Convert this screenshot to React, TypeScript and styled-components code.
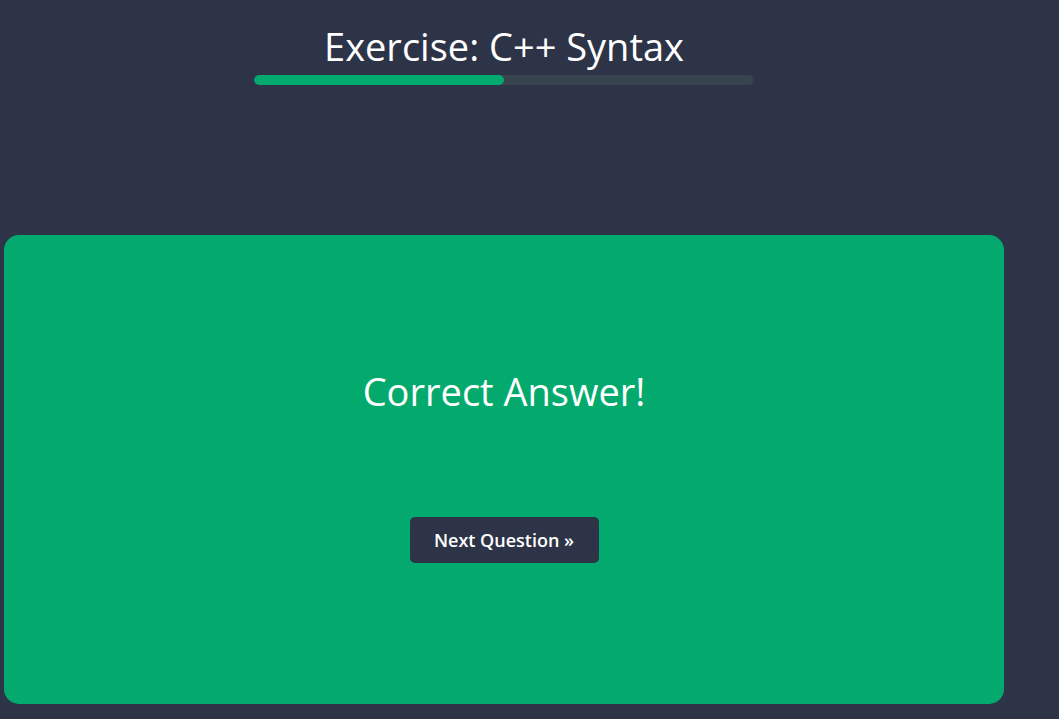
import React from "react";
import styled, { createGlobalStyle } from "styled-components";

const Global = createGlobalStyle`
  html, body { margin: 0; padding: 0; background: #2d3447; }
  body { font-family: "Open Sans", "Noto Sans", sans-serif; color: #fff; }
`;

const Page = styled.div`
  width: 1059px;
  height: 719px;
  box-sizing: border-box;
  padding: 0 0 0 4px;
  overflow: hidden;
`;

const Column = styled.div`
  width: 1000px;
  display: flex;
  flex-direction: column;
  align-items: center;
`;

const Title = styled.h1`
  margin: 24px 0 0;
  font-size: 38px;
  font-weight: 400;
  line-height: 44px;
  color: #fff;
`;

const Track = styled.div`
  margin-top: 7px;
  width: 500px;
  height: 10px;
  border-radius: 5px;
  background: #38444d;
  overflow: hidden;
`;

const Fill = styled.div`
  height: 100%;
  border-radius: 5px;
  background: #04aa6d;
`;

const Card = styled.div`
  margin-top: 150px;
  width: 1000px;
  height: 469px;
  box-sizing: border-box;
  border-radius: 15px;
  background: #04aa6d;
  display: flex;
  flex-direction: column;
  align-items: center;
  padding-top: 134px;
`;

const Message = styled.div`
  font-size: 38px;
  line-height: 44px;
  color: #fff;
`;

const NextButton = styled.button`
  margin-top: 104px;
  width: 189px;
  height: 46px;
  border: none;
  border-radius: 5px;
  background: #2d3447;
  color: #fff;
  font-family: "Open Sans", "Noto Sans", sans-serif;
  font-size: 18px;
  font-weight: 600;
  cursor: pointer;
`;

export default function App() {
  const progress = 50;
  return (
    <Page>
      <Global />
      <Column>
        <Title>Exercise: C++ Syntax</Title>
        <Track>
          <Fill style={{ width: `${progress}%` }} />
        </Track>
        <Card>
          <Message>Correct Answer!</Message>
          <NextButton>Next Question »</NextButton>
        </Card>
      </Column>
    </Page>
  );
}
